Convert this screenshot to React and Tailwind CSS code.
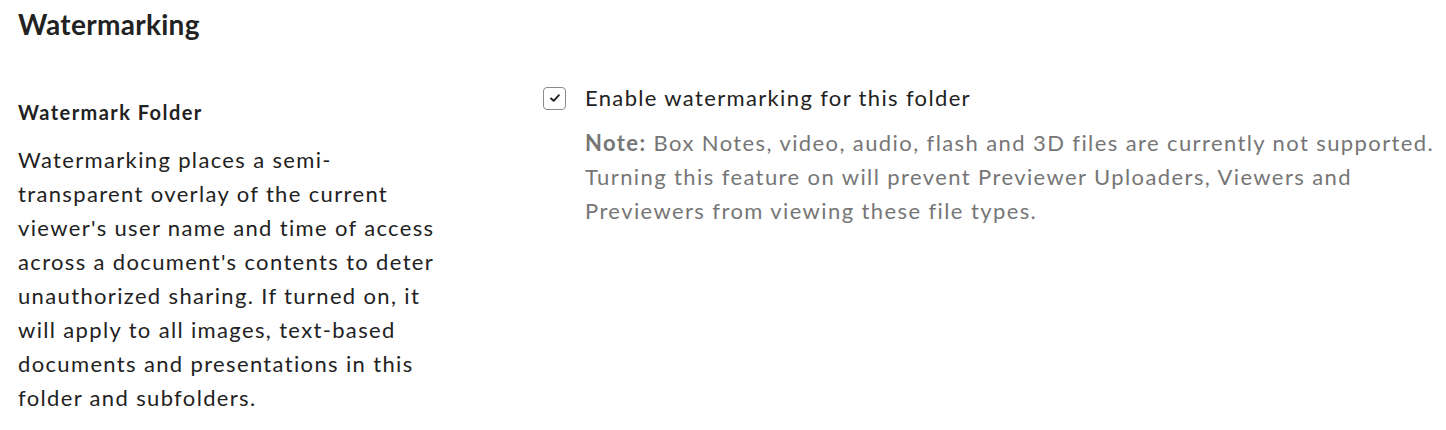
import React from 'react';

const CheckIcon = () => (
  <svg viewBox="0 0 16 16" className="w-[14px] h-[14px]" fill="none">
    <path d="M3.5 8.5 L6.5 11.2 L12.5 4.8" stroke="#222" strokeWidth="2.2" strokeLinecap="round" strokeLinejoin="round" />
  </svg>
);

const App = () => {
  return (
    <div className="w-[1446px] h-[430px] bg-white text-[#222] font-['Lato','Noto_Sans',sans-serif] pl-[18px] pr-[6px] pt-[6px]">
      {/* Section title */}
      <h2 className="text-[28px] leading-[36px] font-bold tracking-[0.3px]">Watermarking</h2>

      <div className="flex mt-[42px]">
        {/* Description column */}
        <div className="w-[436px] shrink-0">
          <h3 className="text-[20px] leading-[28px] font-bold tracking-[1.45px] mt-[14px]">Watermark Folder</h3>
          <p className="text-[22px] leading-[34px] tracking-[1.35px] mt-[17px]">
            Watermarking places a semi-transparent overlay of the current viewer's user name and time of access across a document's contents to deter unauthorized sharing. If turned on, it will apply to all images, text-based documents and presentations in this folder and subfolders.
          </p>
        </div>

        {/* Settings column */}
        <div className="ml-[89px] flex-1">
          <label className="flex items-center gap-[19px]">
            <span className="w-[23px] h-[23px] rounded-[4px] border-[1.5px] border-[#8a8a8a] flex items-center justify-center">
              <CheckIcon />
            </span>
            <span className="text-[22px] leading-[28px] tracking-[1.35px]">Enable watermarking for this folder</span>
          </label>
          <p className="ml-[42px] mt-[14px] text-[22px] leading-[34px] tracking-[1.4px] text-[#767676]">
            <span className="font-bold">Note:</span> Box Notes, video, audio, flash and 3D files are currently not supported. Turning this feature on will prevent Previewer Uploaders, Viewers and Previewers from viewing these file types.
          </p>
        </div>
      </div>
    </div>
  );
};

export default App;
